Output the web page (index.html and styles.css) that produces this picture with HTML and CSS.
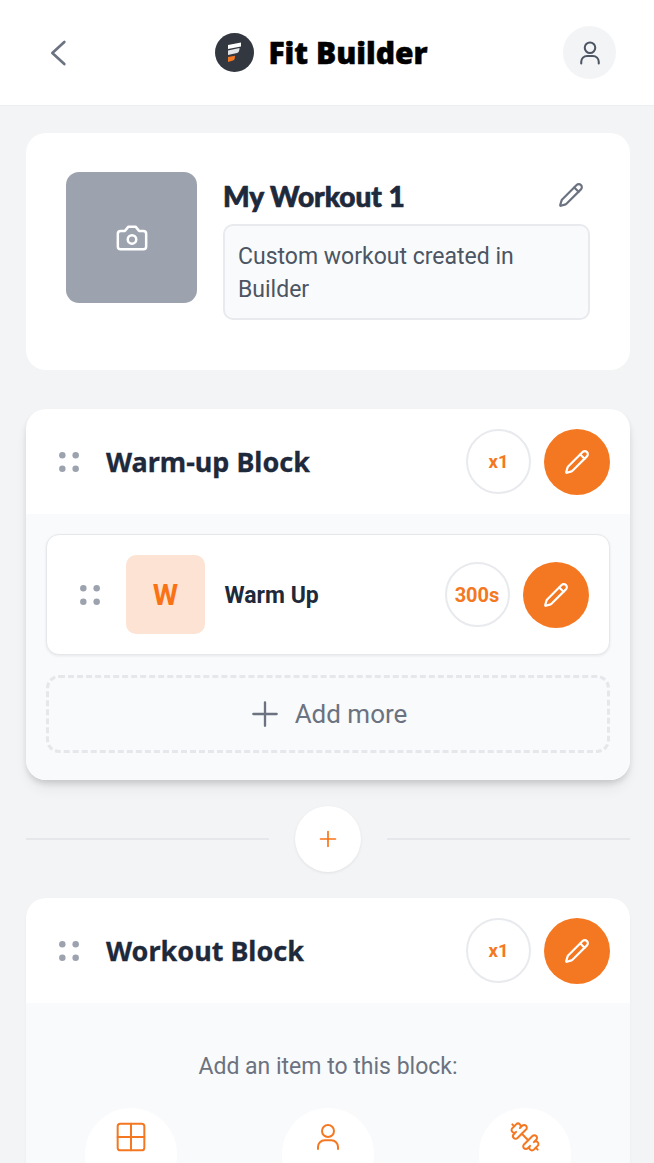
FILE: index.html
```html
<!DOCTYPE html>
<html lang="en">
<head>
<meta charset="utf-8">
<title>Fit Builder</title>
<link rel="stylesheet" href="styles.css">
</head>
<body>
<svg class="defs" width="0" height="0" aria-hidden="true">
  <symbol id="pencil" viewBox="0 0 24 24"><path d="M21.174 6.812a1 1 0 0 0-3.986-3.987L3.842 16.174a2 2 0 0 0-.5.83l-1.321 4.352a.5.5 0 0 0 .623.622l4.353-1.32a2 2 0 0 0 .83-.497z"/><path d="m15 5 4 4"/></symbol>
  <symbol id="dots" viewBox="0 0 21 21"><circle cx="3.5" cy="3.5" r="3.4"/><circle cx="17.5" cy="3.5" r="3.4"/><circle cx="3.5" cy="17.5" r="3.4"/><circle cx="17.5" cy="17.5" r="3.4"/></symbol>
  <symbol id="user" viewBox="0 0 24 24"><circle cx="12" cy="7.5" r="4.5"/><path d="M4.5 21v-1.500a5 5 0 0 1 5-5h5a5 5 0 0 1 5 5V21"/></symbol>
</svg>
<div class="page">
  <header class="topbar">
    <button class="back"><svg viewBox="0 0 24 24" class="back-icon"><path d="M16 3.750 7 12l9 8.250"/></svg></button>
    <div class="brand">
      <svg class="logo" viewBox="0 0 39 39"><circle cx="19.500" cy="19.500" r="19.500" fill="#333740"/><path d="M13 12 26 9.500v4L13 16z" fill="#fff"/><path d="M13 17.500 24.500 15c0 3-1 4.500-2.500 5L13 22z" fill="#e4e5e7"/><path d="M13 24l7-1.200c0 2.700-.5 4.200-2 4.700L13 29z" fill="#f47721"/></svg>
      <span class="brand-name">Fit Builder</span>
    </div>
    <button class="profile"><svg class="profile-icon"><use href="#user"/></svg></button>
  </header>

  <main class="content">
    <section class="summary">
      <div class="photo"><svg viewBox="0 0 24 24" class="camera"><path d="M14.500 4h-5L7 7H4a2 2 0 0 0-2 2v9a2 2 0 0 0 2 2h16a2 2 0 0 0 2-2V9a2 2 0 0 0-2-2h-3z"/><circle cx="12" cy="13" r="3"/></svg></div>
      <div class="summary-body">
        <div class="summary-head">
          <h1 class="workout-name">My Workout 1</h1>
          <svg class="pencil-grey"><use href="#pencil"/></svg>
        </div>
        <p class="description">Custom workout created in Builder</p>
      </div>
    </section>

    <section class="block block-raised">
      <div class="block-head">
        <svg class="dots"><use href="#dots"/></svg>
        <h2 class="block-title">Warm-up Block</h2>
        <span class="chip chip-small">x1</span>
        <button class="edit"><svg class="pencil-white"><use href="#pencil"/></svg></button>
      </div>
      <div class="block-body">
        <div class="item">
          <svg class="dots"><use href="#dots"/></svg>
          <div class="thumb">W</div>
          <span class="item-name">Warm Up</span>
          <span class="chip">300s</span>
          <button class="edit"><svg class="pencil-white"><use href="#pencil"/></svg></button>
        </div>
        <button class="add-more"><svg viewBox="0 0 24 24" class="plus-grey"><path d="M12 2v20M2 12h20"/></svg><span>Add more</span></button>
      </div>
    </section>

    <div class="divider">
      <span class="rule"></span>
      <button class="insert"><svg viewBox="0 0 24 24" class="plus-orange"><path d="M12 3v18M3 12h18"/></svg></button>
      <span class="rule"></span>
    </div>

    <section class="block">
      <div class="block-head">
        <svg class="dots"><use href="#dots"/></svg>
        <h2 class="block-title">Workout Block</h2>
        <span class="chip chip-small">x1</span>
        <button class="edit"><svg class="pencil-white"><use href="#pencil"/></svg></button>
      </div>
      <div class="block-body block-body-empty">
        <p class="prompt">Add an item to this block:</p>
        <div class="options">
          <button class="option"><svg viewBox="0 0 24 24" class="option-icon"><rect x="2" y="2" width="20" height="20" rx="2"/><path d="M12 2v20M2 12h20"/></svg></button>
          <button class="option"><svg class="option-icon"><use href="#user"/></svg></button>
          <button class="option"><svg viewBox="0 0 24 24" class="option-icon"><path d="M14.400 14.400 9.600 9.600"/><path d="M18.657 21.485a2 2 0 1 1-2.829-2.828l-1.767 1.768a2 2 0 1 1-2.829-2.829l6.364-6.364a2 2 0 1 1 2.829 2.829l-1.768 1.767a2 2 0 1 1 2.828 2.829z"/><path d="m21.500 21.500-1.400-1.400"/><path d="M3.900 3.900 2.500 2.500"/><path d="M6.404 12.768a2 2 0 1 1-2.829-2.829l1.768-1.767a2 2 0 1 1-2.828-2.829l2.828-2.828a2 2 0 1 1 2.829 2.828l1.767-1.768a2 2 0 1 1 2.829 2.829z"/></svg></button>
        </div>
      </div>
    </section>
  </main>
</div>
</body>
</html>
```
FILE: styles.css
```css
* { box-sizing: border-box; }
html, body { margin: 0; padding: 0; height: 100%; overflow: hidden; }
body { background: #f3f4f6; font-family: Roboto, "Liberation Sans", sans-serif; color: #1f2937; }
button { border: 0; padding: 0; background: none; font: inherit; cursor: pointer; }
h1, h2, p { margin: 0; }
.defs { position: absolute; }
.page { height: 1163px; overflow: hidden; }

svg { fill: none; stroke: currentColor; stroke-linecap: round; stroke-linejoin: round; stroke-width: 2; display: block; flex: none; }

.topbar { height: 106px; background: #fff; border-bottom: 1px solid #eceef1; display: flex; align-items: center; justify-content: space-between; padding: 0 38px 0 43px; }
.back { width: 32px; height: 32px; color: #6b7280; }
.back-icon { width: 32px; height: 32px; }
.brand { display: flex; align-items: center; gap: 14px; margin-left: 5px; }
.logo { width: 39px; height: 39px; stroke: none; }
.brand-name { font-family: "Noto Sans", sans-serif; font-weight: 900; font-size: 30px; line-height: 39px; color: #000; -webkit-text-stroke: .5px #000; }
.profile { width: 53px; height: 53px; border-radius: 50%; background: #f3f4f6; color: #4b5563; display: flex; align-items: center; justify-content: center; }
.profile-icon { width: 28px; height: 28px; stroke-width: 1.750; }

.content { padding: 27px 24px 0 26px; }

.summary { height: 237px; background: #fff; border-radius: 20px; padding: 39px 40px 0; display: flex; gap: 26px; }
.photo { width: 131px; height: 131px; border-radius: 13px; background: #9ca3af; color: #fff; display: flex; align-items: center; justify-content: center; }
.camera { width: 34px; height: 34px; stroke-width: 1.750; }
.summary-body { flex: 1; }
.summary-head { height: 52px; display: flex; align-items: flex-start; justify-content: space-between; padding-right: 6px; }
.workout-name { font-family: Lato, sans-serif; font-weight: 900; font-size: 28px; line-height: 48px; color: #1e293b; -webkit-text-stroke: .7px #1e293b; }
.pencil-grey { width: 26px; height: 26px; color: #6b7280; margin-top: 10px; }
.description { height: 96px; background: #f9fafb; border: 2px solid #e8eaed; border-radius: 10px; padding: 14px 13px; font-size: 23px; line-height: 33px; color: #4b5563; }

.block { margin-top: 39px; background: #fff; border-radius: 20px; overflow: hidden; box-shadow: 0 1px 3px rgba(0,0,0,.04); }
.block-raised { box-shadow: 0 4px 6px -1px rgba(0,0,0,.14), 0 10px 15px -3px rgba(0,0,0,.07); }
.block-head { height: 105px; display: flex; align-items: center; padding: 0 20px 0 33px; }
.dots { width: 20px; height: 20px; color: #9ca3af; fill: currentColor; stroke: none; }
.block-title { flex: 1; margin-left: 27px; font-family: "Noto Sans", sans-serif; font-weight: 700; font-size: 27px; line-height: 36px; color: #1e293b; -webkit-text-stroke: .3px #1e293b; }
.chip { width: 65px; height: 65px; flex: none; border-radius: 50%; border: 2px solid #e8eaed; background: #fff; color: #f47721; font-weight: 700; font-size: 20px; display: flex; align-items: center; justify-content: center; }
.chip-small { font-size: 18.500px; }
.edit { width: 66px; height: 66px; flex: none; margin-left: 13px; border-radius: 50%; background: #f47721; color: #fff; display: flex; align-items: center; justify-content: center; }
.pencil-white { width: 26px; height: 26px; }

.block-body { background: #f9fafb; padding: 20px 20px 27px; }
.item { height: 121px; background: #fff; border: 1.500px solid #e5e7eb; border-radius: 13px; box-shadow: 0 1px 3px rgba(0,0,0,.08); display: flex; align-items: center; padding: 0 20.500px 0 32.500px; }
.thumb { width: 79px; height: 79px; margin-left: 26px; border-radius: 10px; background: #fde3d3; color: #f97316; font-weight: 700; font-size: 29px; display: flex; align-items: center; justify-content: center; padding-left: 1px; }
.item-name { flex: 1; margin-left: 20px; font-weight: 700; font-size: 23px; line-height: 29px; padding-top: 1px; color: #1e293b; }

.add-more { margin-top: 20px; width: 100%; height: 78px; padding-left: 2px; border: 3px dashed #e5e7eb; border-radius: 13px; color: #6b7280; font-size: 26px; display: flex; align-items: center; justify-content: center; gap: 16px; }
.plus-grey { width: 28px; height: 28px; }

.divider { height: 66px; margin-top: 26px; display: flex; align-items: center; gap: 26px; }
.rule { flex: 1; height: 2px; background: #e5e7eb; }
.insert { width: 66px; height: 66px; flex: none; border-radius: 50%; background: #fff; color: #f97316; box-shadow: 0 1px 3px rgba(0,0,0,.08); display: flex; align-items: center; justify-content: center; }
.plus-orange { width: 20px; height: 20px; }

.divider + .block { margin-top: 26px; }
.block-body-empty { padding: 47px 59px 0; }
.prompt { text-align: center; font-size: 23px; line-height: 34px; color: #6b7280; }
.options { margin-top: 24px; display: flex; justify-content: space-between; }
.option { width: 92px; height: 92px; padding-top: 13px; border-radius: 50%; background: #fff; color: #f47721; display: flex; align-items: flex-start; justify-content: center; }
.option-icon { width: 32px; height: 32px; stroke-width: 1.500; }
```
